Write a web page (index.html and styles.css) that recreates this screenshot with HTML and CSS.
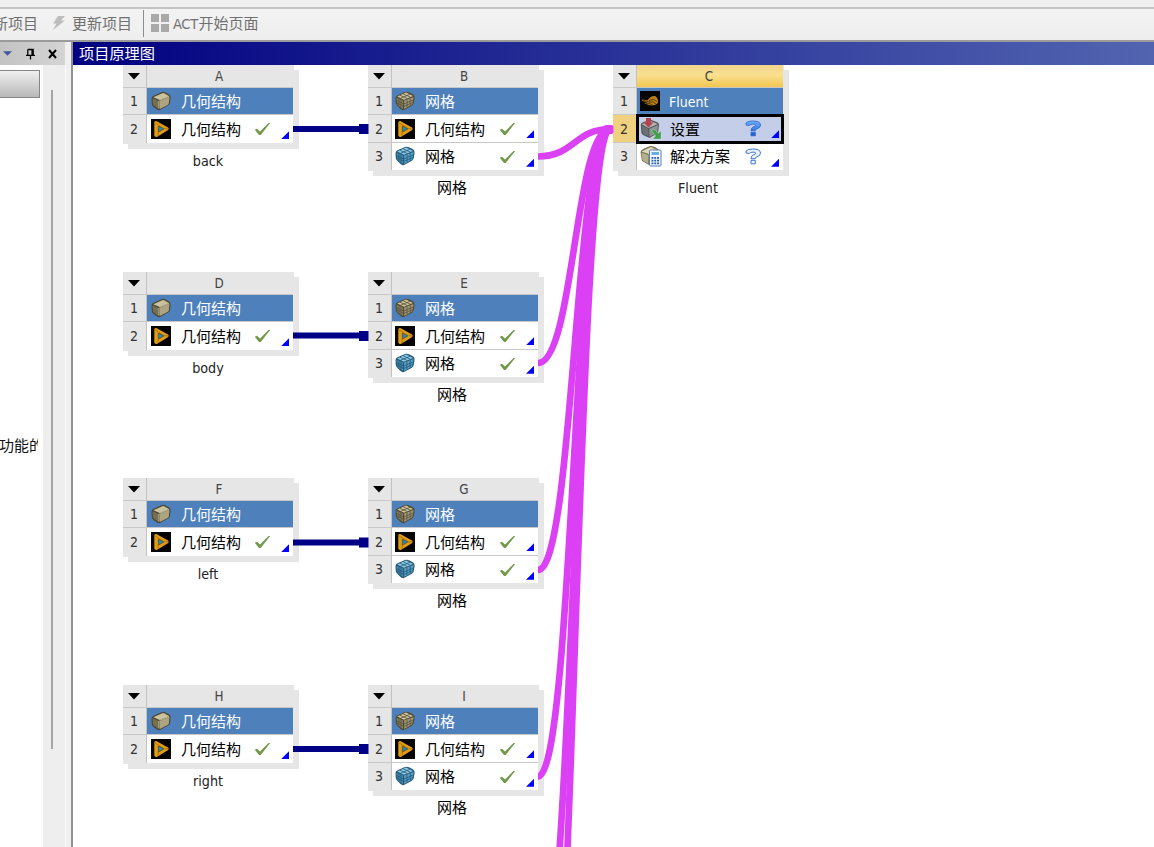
FILE: index.html
```html
<!DOCTYPE html>
<html lang="zh-CN">
<head>
<meta charset="utf-8">
<title>项目原理图</title>
<link rel="stylesheet" href="styles.css">
</head>
<body>
<svg class="defs" aria-hidden="true">
  <defs>
    <linearGradient id="qg" x1="0" y1="0" x2="0" y2="1"><stop offset="0" stop-color="#6fb2ff"/><stop offset="1" stop-color="#1d57c8"/></linearGradient>
    <symbol id="geo" viewBox="0 0 20 20">
      <path d="M.5 8Q.3 5.800 2.500 4.700L11 1Q12.500 .5 14 1.300L17.800 3.200Q19.700 4.200 19.600 6.500L19 12Q18.700 13.500 17 14.500L9 19Q7.500 19.500 6 18.500L2.500 16Q1 15 .8 13Z" fill="#4b4632"/>
      <path d="M2.300 6.300L11.300 2.300Q12.500 1.900 13.500 2.400L18 4.900L8.600 9Z" fill="#c9c29c"/>
      <path d="M8.600 10L18.500 5.800L17.800 12.500Q17.500 13.300 16.500 14L8.800 18Z" fill="#aea580"/>
      <path d="M1.500 7.300L7.600 9.900L7.700 18L3 14.800Q2 14 1.900 13Z" fill="#77704f"/>
      <path d="M7.900 10V17.500M8.500 9.400L18 5.400" stroke="#e4dfc2" stroke-width=".7"/>
    </symbol>
    <symbol id="cube" viewBox="0 0 20 20">
      <path d="M.5 7Q.5 5 3 4L10 1Q12 .3 14 1.300L18 3.300Q19.800 4.500 19.600 7L18.800 12Q18.300 14 16.500 15L9 19Q7 19.500 5.500 18L2 14.500Q.7 13.500 .7 11Z" fill="var(--dark)"/>
      <path d="M2.300 5.600L11 1.600L18 5L9 8.800Z" fill="var(--top)"/>
      <path d="M9.200 9.600L18.600 6L17.300 13.300L9.200 18Z" fill="var(--side)"/>
      <path d="M1.500 6.700L8 9.500V18L2.500 13.700Z" fill="var(--front)"/>
      <path d="M5 4.300L12.500 7.600M8.200 2.900L15.600 6.200M5.400 7.300L14.800 3.400M3.900 7.500V14.600M6 8.700V16.300M1.500 9.600L8.800 13L18.200 9M2 12L8.800 15.500L17.600 11.500M12 8.500V16M15.200 7.300V14.400" fill="none" stroke="var(--line)" stroke-width=".8"/>
    </symbol>
    <symbol id="play" viewBox="0 0 20 20">
      <path d="M0 0H20V20H0Z" fill="#050505"/>
      <path d="M3.300 3.500Q3.500 1.500 5.300 2L17 8.600Q18.300 9.600 17.200 11L6.300 17.700Q3.800 18.600 3.300 16.200Z" fill="#e39d13"/>
      <path d="M7.500 7L12.800 9.900L7.500 13Z" fill="#168ed0" stroke="#39290a" stroke-width=".5"/>
      <path d="M7.200 7V17M3.800 3.700L13 9.600M17.300 9.800H13L7.300 13.200" fill="none" stroke="#8a5d0c" stroke-width=".6"/>
    </symbol>
    <symbol id="check" viewBox="0 0 17 14"><path d="M.8 7.700L3 6.700L6 9.600L14.500 1L16.200 1.100L6.700 13H5Z" fill="#72984b"/></symbol>
    <symbol id="down" viewBox="0 0 12 7"><path d="M0 0H12L6 6.500Z" fill="#000"/></symbol>
    <symbol id="fluent" viewBox="0 0 20 20">
      <path d="M0 0H20V20H0Z" fill="#070604"/>
      <path d="M1.500 8.500L7.500 9.300Q11 4.300 15.300 5Q19.500 8.500 17.500 12.500Q13.500 16 7.500 13.500L4 12L8 11.500L2.500 10Z" fill="#b97f19"/>
      <path d="M3 9.500L10 11M6 12.500Q10 11.800 13 14.300M9 9.500Q14 7 17 10.500M9 11.300Q13 9.500 16 13" fill="none" stroke="#33240a" stroke-width=".7"/>
    </symbol>
    <symbol id="setup" viewBox="0 0 22 22">
      <path d="M.8 6.500Q1 5 3 4.300L10 1.500L18 4.500Q19 5 19 7L18 15L9.500 20L3 17Q1.500 16 1.300 14Z" fill="#55585b"/>
      <path d="M1.800 6.300L10 2.800L17.800 6L8.600 10Z" fill="#b3b6b8"/>
      <path d="M9.300 10.700L18 7L17.300 14.500L9.500 19Z" fill="#8d9194"/>
      <path d="M2 7.500L8.300 10.800L8.400 18.300L3 15.800Z" fill="#6c7073"/>
      <path d="M6 0H11V4.500H13.500L8.500 9.500L3.500 4.500H6Z" fill="#b5424a"/>
      <path d="M11.500 12.800L14 11L18.300 15.300L21 12.700V21H12.700L15.500 18Z" fill="#3f9f48" stroke="#d5ead6" stroke-width=".4"/>
    </symbol>
    <symbol id="calc" viewBox="0 0 22 22">
      <path d="M.5 7Q1 4.500 4 3.500L10 1Q13 .5 16 2.500L19 5V14L9 20L2 16Z" fill="#7c7658"/>
      <path d="M1.500 6.500L11 2L18 5.500L9 9Z" fill="#dfd9b8"/><path d="M8.500 9L18 6V15L9 19Z" fill="#bfb78e"/><path d="M1.500 7.500L8 10V18.500L2.700 15.500Z" fill="#b7af88"/>
      <rect x="9.500" y="5" width="11.500" height="16" rx="1" fill="#f2f7ff" stroke="#527fb9"/>
      <path d="M11.500 7H19V10H11.500Z" fill="#6dafe2"/>
      <path d="M11.500 12.800H19M11.500 15.600H19M11.500 18.400H19" stroke="#285ba8" stroke-width="1.700" stroke-dasharray="1.900 .9"/>
    </symbol>
    <symbol id="quest" viewBox="0 0 17 17">
      <path d="M1 3Q3 1 7.500 1Q15.500 1 15.500 5Q15.500 7.800 12 8.700Q10.300 9.200 10.300 10.700H6Q6 7.600 8.500 6.800Q10.800 6.200 10.800 5.100Q10.800 4.100 8 4.100Q5.500 4.100 4.500 5.500L1 5ZM6 12.300H10.300V15.800H6Z" fill="var(--fill)" stroke="#2d68d2" stroke-width=".9"/>
    </symbol>
  </defs>
</svg>
<div class="app">
  <div class="menu-strip"></div>
  <header class="toolbar">
    <span class="tool first">新项目</span>
    <svg class="bolt" viewBox="0 0 14 16"><path d="M6 1H13L9 5.500H13L1 15L4.500 8.500H1Z" fill="#bcbcbc"/></svg>
    <span class="tool update">更新项目</span>
    <i class="sep"></i>
    <svg class="tiles" viewBox="0 0 18 18"><path d="M0 0H8V8H0ZM10 0H18V8H10ZM0 10H8V18H0ZM10 10H18V18H10Z" fill="#a9a9a9"/></svg>
    <span class="tool act"><span class="act-latin">ACT</span>开始页面</span>
  </header>
  <main class="work">
    <aside class="side">
      <div class="side-head">
        <svg class="tri" viewBox="0 0 10 5"><path d="M0 0H10L5 5Z" fill="#4056a0"/></svg>
        <svg class="pin" viewBox="0 0 10 12"><path d="M2 1H8V7M2 1V7M0 7.500H10M5 8V12" fill="none" stroke="#000" stroke-width="1.400"/><path d="M6 1H8V7H6Z"/></svg>
        <svg class="close" viewBox="0 0 9 10"><path d="M1 1L8 9M8 1L1 9" stroke="#000" stroke-width="2"/></svg>
      </div>
      <div class="side-body">
        <div class="side-list"><div class="column-head"></div><div class="hint">功能的</div></div>
        <div class="scroll"><i></i></div>
      </div>
    </aside>
    <section class="schematic">
      <h1 class="title">项目原理图</h1>
      <div class="canvas" id="canvas">
        <svg class="links" viewBox="0 0 1081 782">
          <g stroke="#000087" stroke-width="6">
            <path d="M220 64H295M220 270.500H295M220 477.500H295M220 684H295"/>
          </g>
          <g fill="#000087"><path d="M286 59H295.500V69H286ZM286 266H295.500V276H286ZM286 472.500H295.500V482.500H286ZM286 679H295.500V689H286Z"/></g>
          <g fill="none" stroke="#dc40f4" stroke-width="6.700">
            <path d="M465 91.500C501 91.500 502 64 537 64"/>
            <path d="M465 298C501 298 502 64 537 64"/>
            <path d="M465 505C501 505 502 64 537 64"/>
            <path d="M465 711.500C501 711.500 502 64 537 64"/>
            <path d="M465 918C501 918 502 64 537 64"/>
            <path d="M465 1125C501 1125 502 64 537 64"/>
          </g>
          <rect x="531" y="60" width="9.500" height="9" rx="2" fill="#dc40f4"/>
        </svg>
      </div>
    </section>
  </main>
</div>
<script src="app.js"></script>
</body>
</html>
```
FILE: styles.css
```css
* { box-sizing: border-box; }
body { margin: 0; overflow: hidden; font-family: "Noto Sans", "Noto Sans CJK SC", sans-serif; color: #111; }
svg { display: block; flex: none; }
.defs { position: absolute; width: 0; height: 0; }
.app { width: 1154px; height: 847px; display: flex; flex-direction: column; background: #f0f0f0; }
.menu-strip { height: 9px; border-bottom: 2px solid #c4c4c4; background: #efefef; }
.toolbar { height: 33px; display: flex; align-items: center; padding-bottom: 3px; background: linear-gradient(#f3f3f3, #eee); border-bottom: 2px solid #9b9b9b; color: #707070; font: 15px/28px "Noto Sans CJK SC", sans-serif; white-space: nowrap; }
.first { margin-left: -7px; width: 45px; }
.bolt { width: 14px; height: 16px; margin-left: 14px; }
.update { margin-left: 6px; width: 60px; }
.sep { width: 1px; height: 27px; background: #8c8c8c; margin-left: 11px; }
.tiles { width: 18px; height: 18px; margin: 0 4px 0 7px; }
.act { font-size: 15px; }
.act-latin { display: inline-block; width: 25.5px; font: 14.5px "DejaVu Sans Condensed", "DejaVu Sans", sans-serif; font-stretch: condensed; letter-spacing: -.3px; }
.work { flex: 1; min-height: 0; display: flex; }
.side { width: 71px; display: flex; flex-direction: column; }
.side-head { width: 65px; height: 23px; background: linear-gradient(90deg, #c3c3c3, #d4d4d4); display: flex; align-items: center; }
.tri { width: 9px; height: 5px; margin-left: 3px; }
.pin { width: 9px; height: 12px; margin-left: 14px; }
.close { width: 9px; height: 10px; margin-left: 13px; }
.side-body { flex: 1; display: flex; }
.side-list { width: 43px; background: #fff; overflow: hidden; padding-top: 5px; }
.column-head { width: 40px; height: 28px; border: 1px solid #868686; border-left: 0; background: linear-gradient(#f0f0f0, #b8b8b8); }
.hint { width: 38px; margin-top: 336px; font-size: 15px; line-height: 22px; text-indent: -1px; overflow: hidden; white-space: nowrap; }
.scroll { width: 23px; padding: 25px 0 0 8px; border-right: 1px solid #fafafa; background: #eee; }
.scroll i { display: block; width: 2px; height: 659px; background: #a5a5a5; }
.schematic { flex: 1; border-left: 2px solid #919191; min-width: 0; background: #fff; }
.title { height: 23px; margin: 0; padding-left: 6px; color: #fff; font-size: 15.2px; font-weight: 400; line-height: 23px; background: linear-gradient(90deg, #000080, #5264b0); }
.canvas { position: relative; height: 782px; overflow: hidden; background: #fff; }
.links { position: absolute; left: 0; top: 0; width: 1081px; height: 782px; z-index: 2; }
.node { position: absolute; width: 171px; }
.grid { background: #e6e6e6; box-shadow: 5px 5px #e6e6e6; padding-bottom: 1px; }
.row { display: flex; height: 27.4px; }
.row.head { height: 23px; }
.num { width: 24px; padding-right: 1px; border-right: 1px solid #c2c2c2; border-bottom: 1px solid #c8c8c8; display: flex; align-items: center; justify-content: center; font: 14px "DejaVu Sans Condensed", "DejaVu Sans", sans-serif; font-stretch: condensed; color: #333; }
.num svg { width: 12px; height: 7px; }
.head .num svg { margin-top: 1px; }
.cell { position: relative; width: 146px; display: flex; align-items: center; border-bottom: 1px solid #c8c8c8; background: #fff; font-size: 15px; line-height: 24px; white-space: nowrap; color: #000; }
.row:last-child .cell, .row:last-child .num { border-bottom: 0; }
.head .cell { justify-content: center; padding: 0 2px 0 0; background: transparent; font: 13.3px "DejaVu Sans Condensed", "DejaVu Sans", sans-serif; font-stretch: condensed; color: #444; }
.name .cell { background: #4e81bc; color: #fff; }
.icon { width: 20px; height: 20px; margin-left: 4px; }
.label { margin-left: 10px; }
.mesh .icon, .fluent .icon { margin-left: 3px; }
.fluent .row:nth-child(n+3) .icon { width: 22px; height: 22px; }
.fluent .row:nth-child(n+3) .label { margin-left: 8px; }
.latin { font: 14px "DejaVu Sans Condensed", "DejaVu Sans", sans-serif; font-stretch: condensed; }
.fluent .latin { margin-left: 9px; padding-top: 1px; }
.state { position: absolute; left: 107px; top: 7px; width: 17px; height: 14px; }
.state.quest { height: 17px; top: 5px; left: 108px; }
.corner { position: absolute; right: 4px; bottom: 3.5px; width: 8px; height: 8px; background: #0000ff; clip-path: polygon(100% 0, 100% 100%, 0 100%); }
.caption { margin-top: 6px; width: 170px; text-align: center; font: 14.2px/22px "DejaVu Sans Condensed", "DejaVu Sans", sans-serif; font-stretch: condensed; color: #222; }
.mesh .caption { margin-top: 5px; font: 15px/22px "Noto Sans CJK SC", sans-serif; color: #000; width: 168px; }
.fluent .head .cell { background: linear-gradient(#f0d58f, #fae08f 45%, #f2c650); }
.selected .num { background: #efd180; }
.selected .cell { background: #c5cee9; outline: 3px solid #000; outline-offset: -2px; z-index: 1; }
.sand { --dark: #4f4b34; --top: #cec5a0; --side: #a1987a; --front: #8a8262; --line: #595139; }
.blue { --dark: #285b78; --top: #8fc9e5; --side: #5b9fc4; --front: #438bb1; --line: #205b7c; }
.solid { --fill: url(#qg); }
.hollow { --fill: #eaf4ff; }
```
FILE: app.js
```js
const canvas = document.getElementById('canvas');
const icon = (id, cls) => `<svg class="${cls}"><use href="#${id}"/></svg>`;
const corner = '<i class="corner"></i>';
const kinds = {
  geometry: [['geo', '', '几何结构'], ['play', '', '几何结构', 'check']],
  mesh: [['cube', 'sand', '网格'], ['play', '', '几何结构', 'check'], ['cube', 'blue', '网格', 'check']],
  fluent: [['fluent', '', 'Fluent'], ['setup', '', '设置', 'quest solid'], ['calc', '', '解决方案', 'quest hollow']]
};
function addNode(letter, kind, x, y, caption) {
  const rows = kinds[kind].map(([id, tone, text, state], i) => {
    const rowClass = i === 0 ? 'name' : kind === 'fluent' && i === 1 ? 'selected' : '';
    const labelClass = text === 'Fluent' ? 'label latin' : 'label';
    const status = state ? icon(state.split(' ')[0], 'state ' + state) + corner : '';
    return `<div class="row ${rowClass}"><div class="num">${i + 1}</div><div class="cell">${icon(id, 'icon ' + tone)}<span class="${labelClass}">${text}</span>${status}</div></div>`;
  }).join('');
  const node = document.createElement('article');
  node.className = 'node ' + kind;
  node.style.left = x + 'px';
  node.style.top = y + 'px';
  node.innerHTML = `<div class="grid"><div class="row head"><div class="num">${icon('down', '')}</div><div class="cell">${letter}</div></div>${rows}</div><div class="caption">${caption}</div>`;
  canvas.appendChild(node);
}
addNode('A', 'geometry', 50, 0, 'back');
addNode('B', 'mesh', 295, 0, '网格');
addNode('C', 'fluent', 540, 0, 'Fluent');
addNode('D', 'geometry', 50, 207, 'body');
addNode('E', 'mesh', 295, 207, '网格');
addNode('F', 'geometry', 50, 413, 'left');
addNode('G', 'mesh', 295, 413, '网格');
addNode('H', 'geometry', 50, 620, 'right');
addNode('I', 'mesh', 295, 620, '网格');
```
